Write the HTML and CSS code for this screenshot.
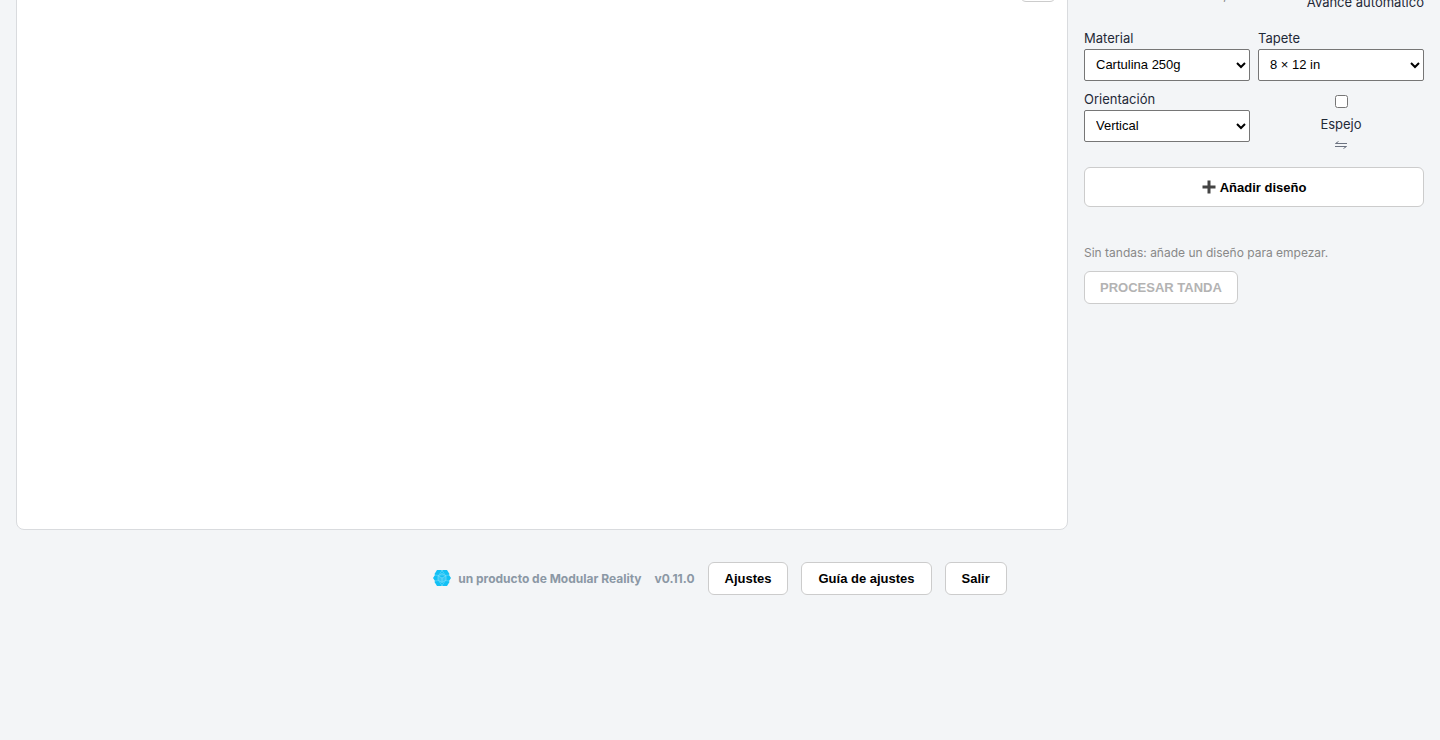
FILE: index.html
```html
<!DOCTYPE html>
<html lang="es">
<head>
<meta charset="utf-8">
<title>Modular Reality</title>
<link rel="stylesheet" href="styles.css">
</head>
<body>
<main class="workspace">
  <section class="canvas" aria-label="Tapete de corte">
    <button class="btn canvas-tool" type="button" aria-label="Ajustar vista"></button>
  </section>
  <aside class="panel">
    <div class="status">
      <span class="status-mark">,</span>
      <span>Avance automático</span>
    </div>
    <div class="fields">
      <div class="field">
        <label for="material">Material</label>
        <select id="material"><option>Cartulina 250g</option></select>
      </div>
      <div class="field">
        <label for="mat">Tapete</label>
        <select id="mat"><option>8 × 12 in</option></select>
      </div>
      <div class="field">
        <label for="orientation">Orientación</label>
        <select id="orientation"><option>Vertical</option></select>
      </div>
      <label class="mirror">
        <input type="checkbox">
        <span>Espejo</span>
        <svg class="mirror-icon" viewBox="0 0 14 10" aria-hidden="true"><path d="M13 3.5H1.500L4.500 1.500M1 6.500h11.500L9.500 8.500"/></svg>
      </label>
    </div>
    <button class="btn btn-add" type="button">
      <svg class="plus" viewBox="0 0 14 14" aria-hidden="true"><path d="M7 .5v13M.5 7h13"/></svg>
      Añadir diseño
    </button>
    <p class="hint">Sin tandas: añade un diseño para empezar.</p>
    <button class="btn btn-process" type="button" disabled>PROCESAR TANDA</button>
  </aside>
</main>
<footer class="footer">
  <span class="brand">
    <svg class="logo" viewBox="0 0 18 18" aria-hidden="true">
      <path class="logo-base" d="M4 0h4l1 .5L10 0h4l2.500 4-.5 1 2 3-2 3 .5 1L14 16h-4l-1-.5L8 16H4l-2.500-4 .5-1-2-3 2-3-.5-1z"/>
      <path class="logo-lines" d="M2 5l3.500.5L9 .5l3.500 5L16 5M2 11l3.500-.5L9 15.500l3.500-5 3.500.5"/>
      <path class="logo-core" d="m9 3.500 4 2.300v4.400l-4 2.300-4-2.300V5.800zM5 5.800 9 8l4-2.200M9 8v4.500"/>
    </svg>
    un producto de Modular Reality
  </span>
  <span class="version">v0.11.0</span>
  <button class="btn" type="button">Ajustes</button>
  <button class="btn" type="button">Guía de ajustes</button>
  <button class="btn" type="button">Salir</button>
</footer>
</body>
</html>
```
FILE: styles.css
```css
* {
  box-sizing: border-box;
}

body {
  margin: 0;
  background: #f3f5f7;
  color: #1f2937;
  font: 13px/20px Inter, sans-serif;
  overflow: hidden;
}

.workspace {
  display: grid;
  grid-template-columns: 1fr 340px;
  gap: 16px;
  margin-top: -40px;
  padding: 0 16px;
}

.canvas {
  display: flex;
  justify-content: flex-end;
  align-items: flex-start;
  min-height: 570px;
  padding: 8px 11px;
  background: #fff;
  border: 1px solid #d9dbde;
  border-radius: 8px;
}

.btn {
  height: 33px;
  padding: 0 15px;
  background: #fff;
  border: 1px solid #ccc;
  border-radius: 6px;
  color: #000;
  font: bold 13px "Liberation Sans", Arial, sans-serif;
}

.canvas-tool {
  width: 36px;
}

.panel {
  display: flex;
  flex-direction: column;
  align-items: flex-start;
  padding-top: 32px;
}

.status {
  display: flex;
  justify-content: flex-end;
  gap: 80px;
  width: 100%;
  margin-bottom: 18px;
}

.status-mark {
  color: #888;
  line-height: 6px;
}

.fields {
  display: grid;
  grid-template-columns: 1fr 1fr;
  gap: 10px 8px;
  width: 100%;
}

.field {
  display: flex;
  flex-direction: column;
  gap: 2px;
  line-height: 17px;
}

select {
  width: 100%;
  height: 32px;
  padding: 0 7px 2px;
  background: #fff;
  border: 1px solid #767676;
  border-radius: 2px;
  color: #000;
  font: 13px "Liberation Sans", Arial, sans-serif;
}

.mirror {
  display: flex;
  flex-direction: column;
  align-items: center;
  padding-top: 4px;
}

.mirror input {
  width: 13px;
  height: 13px;
  margin: 0 0 6px;
}

.mirror-icon {
  width: 14px;
  height: 10px;
  margin: 6px 0 5px;
  fill: none;
  stroke: #6b7280;
}

.btn-add {
  display: flex;
  justify-content: center;
  align-items: center;
  gap: 4px;
  width: 100%;
  height: 40px;
  margin-top: 12px;
}

.plus {
  width: 14px;
  height: 14px;
  stroke: #444;
  stroke-width: 3;
}

.hint {
  margin: 36px 0 8px;
  color: #888;
  font-size: 12px;
}

.btn-process {
  color: #b3b3b3;
}

.footer {
  display: flex;
  justify-content: center;
  align-items: center;
  gap: 13px;
  padding: 32px 16px;
  color: #8b98a5;
  font-size: 12px;
  font-weight: 700;
}

.footer .btn {
  padding: 0 16px;
}

.brand {
  display: flex;
  align-items: center;
  gap: 7px;
}

.logo {
  width: 18px;
  height: 18px;
  fill: none;
}

.logo-base {
  fill: #12c0f5;
}

.logo-lines {
  stroke: #6fdafa;
  stroke-width: 0.6;
}

.logo-core {
  fill: #38c6f4;
  stroke: #7fdffa;
  stroke-width: 0.6;
}
```
